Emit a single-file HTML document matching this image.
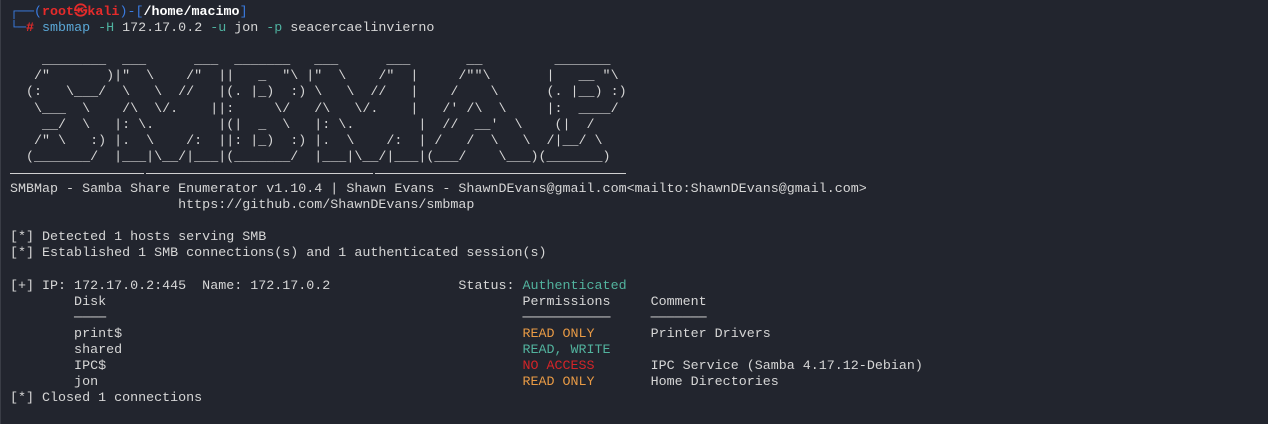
<!DOCTYPE html>
<html><head><meta charset="utf-8"><style>
html,body{margin:0;padding:0;background:#22252e;width:1268px;height:424px;overflow:hidden}
pre{position:absolute;left:10px;top:5px;margin:0;font-family:"Liberation Mono","DejaVu Sans Mono",monospace;font-size:13.35px;line-height:16.1px;color:#d6d6d6;white-space:pre}
.b{color:#3a7be0}.r{color:#e52b2b;font-weight:bold}.w{color:#fff;font-weight:bold}
.c{color:#5aa7d6}.o{color:#4fb2a0}.g{color:#52b39e}.y{color:#e89a45}.x{color:#d42428}
.sep{position:absolute;top:173px;height:1px;background:#d0d0d0}
.bl{position:absolute;left:0;top:0;width:1px;height:424px;background:#3a3d46}
</style></head><body>
<div class="bl"></div>
<pre><span class="b">┌──(</span><span class="r">root㉿kali</span><span class="b">)-[</span><span class="w">/home/macimo</span><span class="b">]</span>
<span class="b">└─</span><span class="r">#</span> <span class="c">smbmap</span> <span class="o">-H</span> 172.17.0.2 <span class="o">-u</span> jon <span class="o">-p</span> seacercaelinvierno

    ________  ___      ___  _______   ___      ___       __         _______
   /"       )|"  \    /"  ||   _  "\ |"  \    /"  |     /""\       |   __ "\
  (:   \___/  \   \  //   |(. |_)  :) \   \  //   |    /    \      (. |__) :)
   \___  \    /\  \/.    ||:     \/   /\   \/.    |   /' /\  \     |:  ____/
    __/  \   |: \.        |(|  _  \   |: \.        |  //  __'  \    (|  /
   /" \   :) |.  \    /:  ||: |_)  :) |.  \    /:  | /   /  \   \  /|__/ \
  (_______/  |___|\__/|___|(_______/  |___|\__/|___|(___/    \___)(_______)

SMBMap - Samba Share Enumerator v1.10.4 | Shawn Evans - ShawnDEvans@gmail.com&lt;mailto:ShawnDEvans@gmail.com&gt;
                     https://github.com/ShawnDEvans/smbmap

[*] Detected 1 hosts serving SMB
[*] Established 1 SMB connections(s) and 1 authenticated session(s)

[+] IP: 172.17.0.2:445  Name: 172.17.0.2                Status: <span class="g">Authenticated</span>
        Disk                                                    Permissions     Comment
        ────                                                    ───────────     ───────
        print$                                                  <span class="y">READ ONLY</span>       Printer Drivers
        shared                                                  <span class="g">READ, WRITE</span>
        IPC$                                                    <span class="x">NO ACCESS</span>       IPC Service (Samba 4.17.12-Debian)
        jon                                                     <span class="y">READ ONLY</span>       Home Directories
[*] Closed 1 connections
</pre>
<div class="sep" style="left:10px;width:134px"></div>
<div class="sep" style="left:146px;width:227px"></div>
<div class="sep" style="left:375px;width:85px"></div>
<div class="sep" style="left:460px;width:166px"></div>
</body></html>
